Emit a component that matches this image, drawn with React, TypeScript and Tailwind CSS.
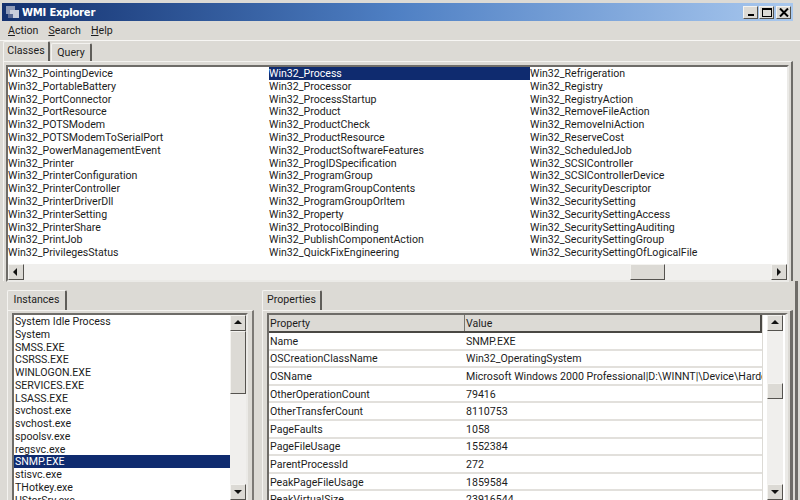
const col1 = ["Win32_PointingDevice","Win32_PortableBattery","Win32_PortConnector","Win32_PortResource","Win32_POTSModem","Win32_POTSModemToSerialPort","Win32_PowerManagementEvent","Win32_Printer","Win32_PrinterConfiguration","Win32_PrinterController","Win32_PrinterDriverDll","Win32_PrinterSetting","Win32_PrinterShare","Win32_PrintJob","Win32_PrivilegesStatus"];
const col2 = ["Win32_Process","Win32_Processor","Win32_ProcessStartup","Win32_Product","Win32_ProductCheck","Win32_ProductResource","Win32_ProductSoftwareFeatures","Win32_ProgIDSpecification","Win32_ProgramGroup","Win32_ProgramGroupContents","Win32_ProgramGroupOrItem","Win32_Property","Win32_ProtocolBinding","Win32_PublishComponentAction","Win32_QuickFixEngineering"];
const col3 = ["Win32_Refrigeration","Win32_Registry","Win32_RegistryAction","Win32_RemoveFileAction","Win32_RemoveIniAction","Win32_ReserveCost","Win32_ScheduledJob","Win32_SCSIController","Win32_SCSIControllerDevice","Win32_SecurityDescriptor","Win32_SecuritySetting","Win32_SecuritySettingAccess","Win32_SecuritySettingAuditing","Win32_SecuritySettingGroup","Win32_SecuritySettingOfLogicalFile"];
const instances = ["System Idle Process","System","SMSS.EXE","CSRSS.EXE","WINLOGON.EXE","SERVICES.EXE","LSASS.EXE","svchost.exe","svchost.exe","spoolsv.exe","regsvc.exe","SNMP.EXE","stisvc.exe","THotkey.exe","UStorSrv.exe"];
const props = [["Name","SNMP.EXE"],["OSCreationClassName","Win32_OperatingSystem"],["OSName","Microsoft Windows 2000 Professional|D:\\WINNT|\\Device\\Harddisk0"],["OtherOperationCount","79416"],["OtherTransferCount","8110753"],["PageFaults","1058"],["PageFileUsage","1552384"],["ParentProcessId","272"],["PeakPageFileUsage","1859584"],["PeakVirtualSize","23916544"]];

const raised = "border border-t-[#f4f3f0] border-l-[#f4f3f0] border-r-[#55534f] border-b-[#55534f]";
const sunken = "border-2 border-t-[#6e6c68] border-l-[#6e6c68] border-r-[#ebeae7] border-b-[#ebeae7]";

function ScrollBtn({ dir }: { dir: "up" | "down" | "left" | "right" }) {
  const pts = { up: "1,6 5,2 9,6", down: "1,3 5,7 9,3", left: "6,1 2,5 6,9", right: "3,1 7,5 3,9" }[dir];
  return (
    <div className={`w-4 h-4 shrink-0 flex items-center justify-center bg-[#dcdad5] ${raised}`}>
      <svg width="10" height="10" viewBox="0 0 10 10"><polygon points={pts} fill="#111" /></svg>
    </div>
  );
}

function Tab({ label, active, width }: { label: string; active?: boolean; width: string }) {
  return (
    <div className={`${width} flex items-center justify-center bg-[#dcdad5] border-t border-l border-t-[#f4f3f0] border-l-[#f4f3f0] border-r-2 border-r-[#5f5d59] rounded-t-[2px] ${active ? "h-[20px] pb-[2px]" : "h-[18px]"}`}>
      {label}
    </div>
  );
}

export default function App() {
  return (
    <div className="w-[800px] h-[500px] overflow-hidden flex flex-col bg-[#dcdad5] text-[10.6px] leading-[13px] text-[#1c1c1c] font-['Roboto',sans-serif] pt-[3px]">
      {/* title bar */}
      <div className="h-[18px] shrink-0 ml-[2px] mr-[7px] flex items-center pl-[3px] pr-[2px] bg-gradient-to-r from-[#14316f] via-[#4f80c4] to-[#a9c8ee]">
        <svg width="16" height="16" viewBox="0 0 16 16" className="shrink-0">
          <rect x="1" y="2" width="9" height="8" fill="#8f9bb8" />
          <rect x="5" y="6" width="9" height="8" fill="#c9cedb" />
          <rect x="3" y="10" width="5" height="4" fill="#5a6a94" />
        </svg>
        <span className="ml-[1px] text-white font-bold text-[10px] tracking-[-0.2px] font-['DejaVu_Sans',sans-serif]">WMI Explorer</span>
        <div className="ml-auto flex gap-[1px]">
          <div className={`w-[15px] h-[13px] bg-[#dcdad5] flex items-end justify-center pb-[2px] ${raised}`}><div className="w-[6px] h-[2px] bg-black" /></div>
          <div className={`w-[15px] h-[13px] bg-[#dcdad5] flex items-center justify-center ${raised}`}><div className="w-[10px] h-[9px] border border-t-2 border-black" /></div>
          <div className={`ml-[1px] w-[15px] h-[13px] bg-[#dcdad5] flex items-center justify-center ${raised}`}>
            <svg width="10" height="9" viewBox="0 0 10 9"><path d="M1 0.5 L9 8.5 M9 0.5 L1 8.5" stroke="#000" strokeWidth="2" /></svg>
          </div>
        </div>
      </div>

      {/* menu */}
      <div className="h-[18px] shrink-0 flex items-center gap-[10px] pl-[8px]">
        <span><u>A</u>ction</span>
        <span><u>S</u>earch</span>
        <span><u>H</u>elp</span>
      </div>
      <div className="h-px shrink-0 bg-[#f7f6f4] mt-px" />

      {/* classes tabs */}
      <div className="h-[20px] shrink-0 flex items-end pl-[3px] gap-[1px]">
        <Tab label="Classes" active width="w-[47px]" />
        <Tab label="Query" width="w-[41px]" />
      </div>
      <div className="h-[220px] shrink-0 mr-[7px] ml-[3px] pt-[3px] pl-[2px] pr-[2px] border-t border-t-[#f4f3f0] border-r-2 border-r-[#6e6c68] border-l border-l-[#f4f3f0]">
        <div className={`h-[217px] flex flex-col bg-white ${sunken}`}>
          <div className="flex-1 min-h-0 overflow-hidden flex">
            {[col1, col2, col3].map((col, i) => (
              <div key={i} className="w-[261px] shrink-0">
                {col.map((name) => (
                  <div key={name} className={`h-[12.8px] leading-[13px] whitespace-nowrap ${name === "Win32_Process" ? "bg-[#0f2b6f] text-white" : ""}`}>{name}</div>
                ))}
              </div>
            ))}
          </div>
          <div className="h-4 shrink-0 flex bg-[#f0efed]">
            <ScrollBtn dir="left" />
            <div className="flex-1 flex pl-[606px]"><div className={`w-[35px] h-4 bg-[#dcdad5] ${raised}`} /></div>
            <ScrollBtn dir="right" />
          </div>
        </div>
      </div>

      {/* lower panes */}
      <div className="flex-1 min-h-0 flex pt-[9px] pl-[7px] mr-[2px] border-r-[3px] border-r-[#6e6c68]">
        <div className="w-[247px] shrink-0 flex flex-col">
          <div className="h-[20px] shrink-0 flex items-end"><Tab label="Instances" active width="w-[60px]" /></div>
          <div className="flex-1 min-h-0 pt-[2px] pl-[4px] pr-[4px] border-t border-t-[#f4f3f0] border-l border-l-[#f4f3f0] border-r-2 border-r-[#7b7975]">
            <div className={`h-full flex bg-white border-b-0 ${sunken}`}>
              <div className="flex-1 min-w-0 overflow-hidden">
                {instances.map((p, i) => (
                  <div key={i} className={`h-[12.75px] pl-[1px] whitespace-nowrap ${p === "SNMP.EXE" ? "bg-[#0f2b6f] text-white" : ""}`}>{p}</div>
                ))}
              </div>
              <div className="w-4 shrink-0 flex flex-col bg-[#f0efed]">
                <ScrollBtn dir="up" />
                <div className={`h-[63px] shrink-0 bg-[#dcdad5] ${raised}`} />
                <div className="mt-auto"><ScrollBtn dir="down" /></div>
              </div>
            </div>
          </div>
        </div>
        <div className="w-[8px] shrink-0" />
        <div className="flex-1 min-w-0 flex flex-col mr-[2px]">
          <div className="h-[20px] shrink-0 flex items-end"><Tab label="Properties" active width="w-[60px]" /></div>
          <div className="flex-1 min-h-0 pt-[2px] pl-[4px] pr-[2px] border-t border-t-[#f4f3f0] border-l border-l-[#f4f3f0] border-r-[3px] border-r-[#6e6c68]">
            <div className={`h-full flex bg-white border-b-0 ${sunken} border-r-[3px] border-r-[#6e6c68]`}>
              <div className="flex-1 min-w-0 overflow-hidden border-r border-r-[#dcdad5]">
                <div className="h-[18px] flex bg-[#dcdad5] border-b-2 border-b-[#4a4844] border-r-2 border-r-[#4a4844]">
                  <div className="w-[196px] shrink-0 pl-[1px] flex items-center border-r border-r-[#77756f]">Property</div>
                  <div className="flex-1 pl-[1px] flex items-center">Value</div>
                </div>
                {props.map(([k, v]) => (
                  <div key={k} className="h-[17.6px] flex items-center pt-px border-b-2 border-b-[#e2e0dc] whitespace-nowrap">
                    <div className="w-[196px] shrink-0 pl-[1px]">{k}</div>
                    <div className="flex-1 min-w-0 pl-[1px] overflow-hidden">{v}</div>
                  </div>
                ))}
              </div>
              <div className="w-4 shrink-0 ml-[4px] mr-[2px] flex flex-col bg-[#f0efed]">
                <ScrollBtn dir="up" />
                <div className="h-[52px] shrink-0" />
                <div className={`h-[16px] shrink-0 bg-[#dcdad5] ${raised}`} />
                <div className="mt-auto"><ScrollBtn dir="down" /></div>
              </div>
            </div>
          </div>
        </div>
      </div>
    </div>
  );
}
